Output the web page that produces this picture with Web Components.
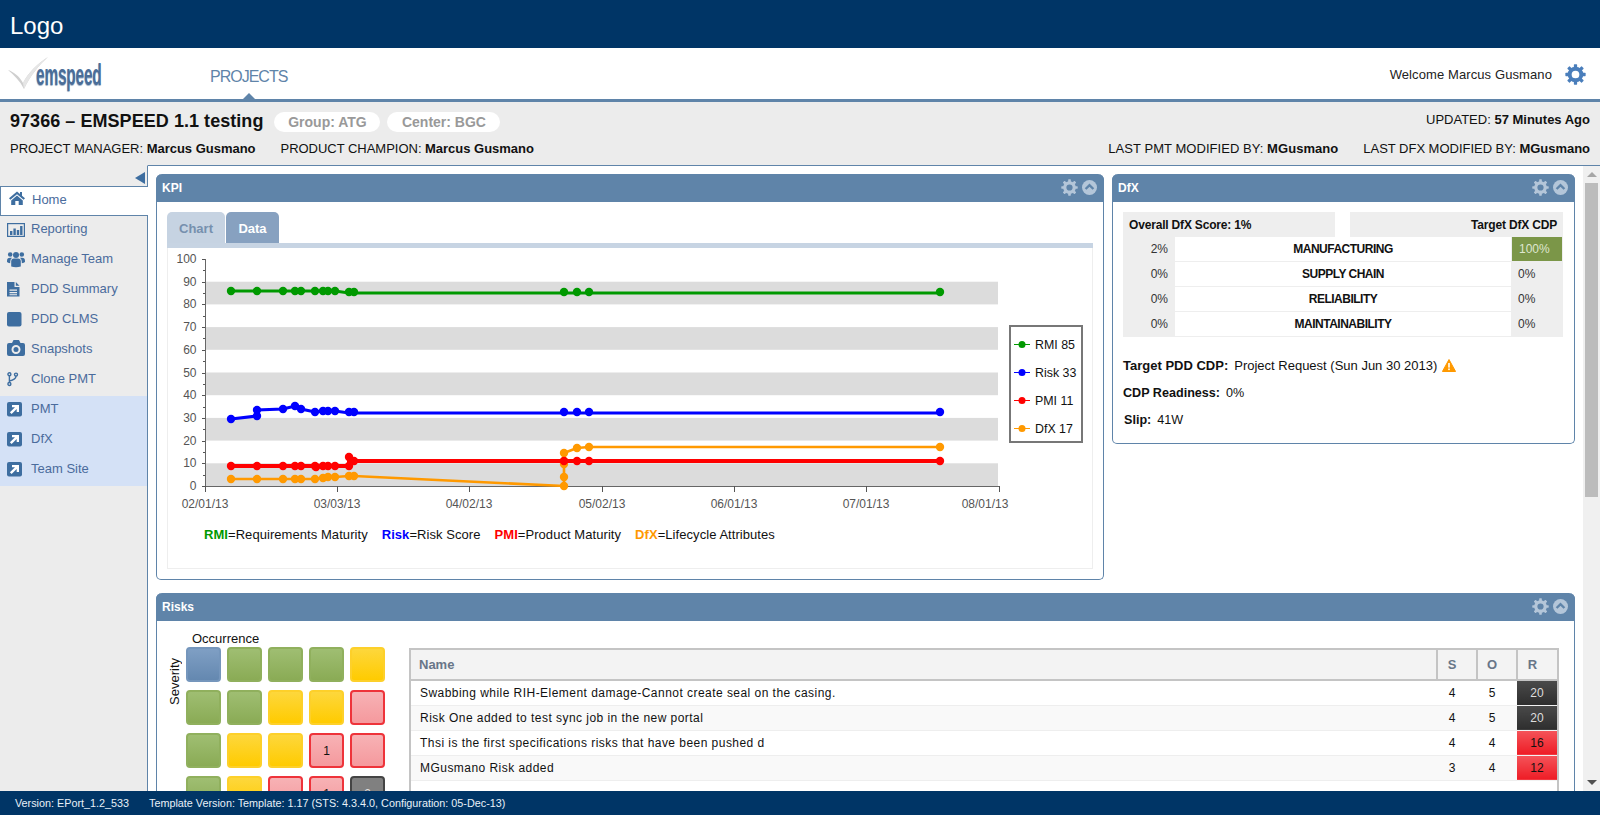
<!DOCTYPE html>
<html lang="en">
<head>
<meta charset="utf-8">
<title>EMSPEED</title>
<style>
html,body{margin:0;height:100%;overflow:hidden;background:#fff}
body{font-family:"Liberation Sans",Arial,sans-serif;font-size:13px;color:#111}
</style>
</head>
<body>
<app-shell>
  <app-topbar slot="top">Logo</app-topbar>
  <app-nav slot="top"></app-nav>
  <project-header slot="top"></project-header>
  <side-nav slot="side">
    <side-item icon="home" active>Home</side-item>
    <side-item icon="report">Reporting</side-item>
    <side-item icon="team">Manage Team</side-item>
    <side-item icon="file">PDD Summary</side-item>
    <side-item icon="square">PDD CLMS</side-item>
    <side-item icon="camera">Snapshots</side-item>
    <side-item icon="branch">Clone PMT</side-item>
    <side-item icon="ext" link>PMT</side-item>
    <side-item icon="ext" link>DfX</side-item>
    <side-item icon="ext" link>Team Site</side-item>
  </side-nav>
  <dash-board slot="main">
    <dash-panel heading="KPI"><kpi-chart></kpi-chart></dash-panel>
    <dash-panel heading="DfX"><dfx-summary></dfx-summary></dash-panel>
    <dash-panel heading="Risks" wide>
      <risk-view></risk-view>
    </dash-panel>
  </dash-board>
  <fake-scrollbar slot="scroll"></fake-scrollbar>
  <app-footer slot="bottom"></app-footer>
</app-shell>
<script>
const GEAR=(c,s=18)=>{let t='';for(let i=0;i<8;i++)t+=`<rect x="7.6" y="0.3" width="2.8" height="4" rx=".5" fill="${c}" transform="rotate(${i*45} 9 9)"/>`;
  return `<svg width="${s}" height="${s}" viewBox="0 0 18 18" aria-hidden="true">${t}<circle cx="9" cy="9" r="5" fill="none" stroke="${c}" stroke-width="3.4"/></svg>`};
function def(name,html,init){customElements.define(name,class extends HTMLElement{
  connectedCallback(){if(this.shadowRoot)return;const r=this.attachShadow({mode:'open'});
    r.innerHTML=typeof html==='function'?html(this):html;if(init)init(r,this);}
});}

def('app-shell',`<style>
:host{display:flex;flex-direction:column;height:815px;overflow:hidden}
.row{flex:1;min-height:0;display:flex}
.side{flex:none;display:flex}
.main{flex:1;min-width:0;display:flex;overflow:hidden;border-top:1px solid #5f84a9}
</style><slot name="top"></slot><div class="row"><div class="side"><slot name="side"></slot></div><div class="main"><slot name="main"></slot><slot name="scroll"></slot></div></div><slot name="bottom"></slot>`);

def('app-topbar',`<style>:host{display:flex;align-items:center;height:48px;flex:none;background:#003566;color:#fff;font-size:24px;padding-left:10px;padding-top:4px;box-sizing:border-box}</style><slot></slot>`);

def('app-nav',`<style>
:host{display:flex;align-items:center;height:54px;flex:none;background:#fff;border-bottom:3px solid #5f84a9;box-sizing:border-box;position:relative}
.logo{width:110px;height:44px;margin-left:6px;position:relative;flex:none}
.logo svg{position:absolute;left:0;top:0}
.word{position:absolute;left:30px;top:8px;font:bold 29px/30px "Liberation Sans Narrow","Liberation Sans",sans-serif;color:#4a6d98;transform:scaleX(.53);transform-origin:0 0;letter-spacing:-.3px;text-shadow:0 1px 1px #9fb2c8;white-space:nowrap}
.tab{margin-left:94px;font-size:16px;letter-spacing:-1px;color:#5f84a9;position:relative;align-self:stretch;display:flex;align-items:center;width:78px;padding-top:6px;box-sizing:border-box}
.tab i{position:absolute;left:33px;bottom:0;border:6px solid transparent;border-top:0;border-bottom:6px solid #5f84a9}
.right{margin-left:auto;display:flex;align-items:center;padding:2px 14px 0 0}
.right span{margin-right:13px;font-size:13px;color:#222;letter-spacing:.1px}
</style>
<div class="logo"><svg width="46" height="44" viewBox="0 0 46 44" aria-hidden="true"><path d="M2 18 C8 20 13 24 17 31 C22 21 32 11 42 5 C33 13 24 24 18 37 C14 29 8 23 2 18Z" fill="#cfcfcf"/><path d="M17 31 C22 21 32 11 42 5 C33 13 24 24 18 37Z" fill="#e6e6e6"/></svg><span class="word">emspeed</span></div>
<div class="tab">PROJECTS<i></i></div>
<div class="right"><span>Welcome Marcus Gusmano</span>${GEAR('#4a7ebb',21)}</div>`);

def('project-header',`<style>
:host{display:block;height:63px;flex:none;background:#ececec;box-sizing:border-box;padding:0 10px;color:#111}
.a,.b{display:flex;align-items:center}
.a{height:34px;padding-top:2px;box-sizing:border-box}
.b{height:24px;font-size:13px;letter-spacing:-.02px}
h1{font-size:18px;margin:2px 0 0;font-weight:bold;letter-spacing:.05px}
.pill{background:#fff;border-radius:10px;height:20px;line-height:20px;font-weight:bold;font-size:14px;color:#999;box-sizing:border-box;text-align:center;margin:4px 0 0 7px}
.p1{width:106px;margin-left:11px}.p2{width:113px}
b{font-weight:bold}
.sp{margin-left:auto}
.up{margin-bottom:2px;font-size:13px}
.g{margin-left:25px}
.w{letter-spacing:.05px}
</style>
<div class="a"><h1>97366 – EMSPEED 1.1 testing</h1><span class="pill p1">Group: ATG</span><span class="pill p2">Center: BGC</span><span class="sp up">UPDATED: <b>57 Minutes Ago</b></span></div>
<div class="b"><span>PROJECT MANAGER: <b>Marcus Gusmano</b></span><span class="g">PRODUCT CHAMPION: <b>Marcus Gusmano</b></span><span class="sp w">LAST PMT MODIFIED BY: <b>MGusmano</b></span><span class="g">LAST DFX MODIFIED BY: <b>MGusmano</b></span></div>`);

def('side-nav',`<style>
:host{display:block;width:148px;box-sizing:border-box;background:#ececec;border-right:1px solid #5f84a9;border-top:1px solid #ececec;position:relative}
.t{height:20px;display:flex;justify-content:flex-end;align-items:flex-end;padding-right:2px;box-sizing:border-box;padding-bottom:2px}
.t i{border:6px solid transparent;border-left:0;border-right:10px solid #3e6ea0}
</style><div class="t"><i></i></div><slot></slot>`);

const ICONS={
home:`<path d="M9 1.5 L1 8.3 L2.4 9.7 L9 4.2 L15.6 9.7 L17 8.3 L14 5.7 V2 H12 V4 Z M9 5.6 L3.2 10.4 V15 H7.3 V11 H10.7 V15 H14.8 V10.4Z"/>`,
report:`<rect x=".6" y=".6" width="16.8" height="12.8" fill="none" stroke="#3e6ea0" stroke-width="1.2"/><rect x="3" y="8" width="2.4" height="4"/><rect x="6.4" y="5.5" width="2.4" height="6.5"/><rect x="9.8" y="7" width="2.4" height="5"/><rect x="13.1" y="3" width="2.4" height="9"/>`,
team:`<circle cx="9" cy="4" r="3"/><circle cx="3.2" cy="3.5" r="2.3"/><circle cx="14.8" cy="3.5" r="2.3"/><path d="M4.2 15.5 V10.5 Q4.2 7.5 7 7.5 H11 Q13.8 7.5 13.8 10.5 V15.5 Q9 17 4.2 15.5Z"/><path d="M0 10 Q0 6.8 3 6.8 H5 Q3.2 8.2 3.2 10.8 V12.2 Q0.8 12 0 11Z"/><path d="M18 10 Q18 6.8 15 6.8 H13 Q14.8 8.2 14.8 10.8 V12.2 Q17.2 12 18 11Z"/>`,
file:`<path fill-rule="evenodd" d="M0 0 H7.5 V5 H12.5 V14.5 H0Z M2.5 7.5 V8.7 H10 V7.5Z M2.5 10 V11.2 H10 V10Z M2.5 12.3 V13.3 H10 V12.3Z"/><path d="M8.8 0 L12.5 3.8 H8.8Z"/>`,
square:`<rect x="0" y="0" width="14.5" height="14.5" rx="2"/>`,
camera:`<path fill-rule="evenodd" d="M2 3 H5 L6.5 0 H12 L13.5 3 H16 Q18 3 18 5 V14 Q18 16 16 16 H2 Q0 16 0 14 V5 Q0 3 2 3Z M9 5 A4.5 4.5 0 1 0 9 14 A4.5 4.5 0 1 0 9 5Z"/><circle cx="9" cy="9.5" r="2.5"/>`,
branch:`<g fill="none" stroke="#3e6ea0" stroke-width="1.4"><circle cx="2.4" cy="2.2" r="1.5"/><circle cx="2.4" cy="12" r="1.5"/><circle cx="9" cy="2.6" r="1.5"/><path d="M2.4 3.7 V10.5 M9 4.1 Q9 7.8 2.4 9"/></g>`,
ext:`<rect width="15" height="14.5" rx="2"/><path d="M5 3 H12 V10 H9.7 V6.9 L4.6 12 L2.9 10.3 L8 5.2 H5Z" fill="#fff"/>`
};
const TOPS={home:3,report:7,team:5,file:6,square:6,camera:4,branch:6,ext:6};
def('side-item',h=>`<style>
:host{display:flex;height:30px;box-sizing:border-box;padding:4px 0 0 7px;color:#4a6b9c;font-size:13px;line-height:17px;position:relative}
:host([active]){background:#fff;width:148px;border:1px solid #5f84a9;border-right:0;z-index:1;margin-right:-1px}
:host([link]){background:#d4e1f6}
svg{flex:none;width:18px;height:17px;margin-right:6px;margin-top:${TOPS[h.getAttribute('icon')]-4}px;fill:#3e6ea0;overflow:visible}
</style><svg viewBox="0 0 18 17" aria-hidden="true">${ICONS[h.getAttribute('icon')]}</svg><span><slot></slot></span>`);

def('dash-board',`<style>
:host{flex:1;min-width:0;display:grid;grid-template-columns:948px 463px;column-gap:8px;row-gap:13px;align-content:start;align-items:start;padding:8px 8px 0;box-sizing:border-box;background:#fff;overflow:hidden}
</style><slot></slot>`);

def('dash-panel',h=>`<style>
:host{display:block;background:#fff;border:1px solid #5f84a9;border-top:0;border-radius:6px 6px 5px 5px;box-sizing:border-box}
:host([wide]){grid-column:1 / span 2}
header{height:28px;margin:0 -1px;background:#5f84a9;border-radius:6px 6px 0 0;display:flex;align-items:center;color:#fff;font-weight:bold;font-size:12px;padding:0 4px 0 6px}
.ic{margin:-2px 0 0 auto;display:flex;align-items:center;gap:3px;padding-right:2px}
</style><header><span>${h.getAttribute('heading')}</span><span class="ic">${GEAR('#b4c6d9',17)}<svg width="17" height="17" viewBox="0 0 17 17" aria-hidden="true"><circle cx="8.5" cy="8.5" r="7.5" fill="#b4c6d9"/><path d="M4.6 10 L8.5 6.1 L12.4 10" fill="none" stroke="#5f84a9" stroke-width="2.4"/></svg></span></header><slot></slot>`);

def('kpi-chart',`<style>
:host{display:block;padding:10px;height:357px;box-sizing:content-box}
.tabs{display:flex;gap:1px;height:31px}
.tabs span{border-radius:5px 5px 0 0;font-weight:bold;font-size:13px;display:flex;align-items:center;justify-content:center;padding-top:1px;box-sizing:border-box}
.c{width:58px;background:#c6d3e2;color:#7690ae}
.d{width:53px;background:#87a1c0;color:#fff}
.strip{height:5px;background:#c7d4e3}
.box{height:321px;box-sizing:border-box;border:1px solid #eee;border-top:0;display:flex;flex-direction:column}
svg{display:block;flex:none;margin-left:-1px}
.leg{display:flex;font-size:13px;letter-spacing:.06px;margin:2px 0 0 36px;gap:14px;color:#111;line-height:16px}
.leg b{font-weight:bold}
</style>
<div class="tabs"><span class="c">Chart</span><span class="d">Data</span></div><div class="strip"></div>
<div class="box"><svg id="s" width="925" height="277" viewBox="167 248 925 277" font-family="Liberation Sans, Arial, sans-serif" font-size="12"></svg>
<div class="leg"><span><b style="color:#090">RMI</b>=Requirements Maturity</span><span><b style="color:#00f">Risk</b>=Risk Score</span><span><b style="color:#f00">PMI</b>=Product Maturity</span><span><b style="color:#f90">DfX</b>=Lifecycle Attributes</span></div></div>`,
r=>{
 const Y=v=>486-v*2.27;let o='';
 for(const b of [0,20,40,60,80])o+=`<rect x="205" y="${Y(b+10)}" width="793" height="${22.7}" fill="#dcdcdc"/>`;
 o+=`<path d="M205.5 259 V486.5 H999" fill="none" stroke="#666"/>`;
 for(let v=0;v<=100;v+=5){const y=Math.round(Y(v))+.5;o+=`<path d="M${v%10?203:202} ${y} H205" stroke="#555"/>`;}
 for(let v=0;v<=100;v+=10)o+=`<text x="196.5" y="${Math.round(Y(v))+3.5}" text-anchor="end" fill="#555">${v}</text>`;
 const xs=[[205,205,'02/01/13'],[337,337,'03/03/13'],[469,469,'04/02/13'],[602,602,'05/02/13'],[734,734,'06/01/13'],[866,866,'07/01/13'],[999,985,'08/01/13']];
 for(const [t,l,s] of xs){o+=`<path d="M${t+.5} 486 V492" stroke="#555"/><text x="${l}" y="508" text-anchor="middle" fill="#555">${s}</text>`;}
 const series=[
 ['#090',3,[[231,291],[257,291],[283,291],[295,291],[301,291],[315,291],[323,291],[328,291],[335,291],[349,292],[354,292],[564,292],[577,292],[589,292],[940,292]]],
 ['#00f',3,[[231,419],[257,416],[257,410],[283,409],[295,406],[301,409],[315,412],[323,411],[328,411],[335,411],[349,412],[354,412],[564,412],[577,412],[589,412],[940,412]]],
 ['#f00',4,[[231,466],[257,466],[283,466],[295,466],[301,466],[315,466],[316,467],[323,466],[328,466],[335,466],[349,466],[349,457],[354,461],[564,461],[577,461],[589,461],[940,461]]],
 ['#f90',2.6,[[231,479],[257,479],[283,479],[295,479],[301,479],[315,479],[323,478],[328,477],[335,477],[349,476],[354,476],[564,486],[564,477],[564,464],[564,461],[564,453],[577,448],[589,447],[940,447]]]];
 for(const i of [0,1,3,2]){const [c,w,p]=series[i];
  const dy=q=>(i===0||i===1)&&q[0]>=349?q[1]+1:q[1];
  o+=`<polyline fill="none" stroke="${c}" stroke-width="${w}" points="${p.map(q=>q[0]+','+dy(q)).join(' ')}"/>`;
  for(const q of p)o+=`<circle cx="${q[0]}" cy="${q[1]}" r="4.2" fill="${c}"/>`;}
 o+=`<rect x="1010" y="326" width="72" height="116" fill="#fff" stroke="#777" stroke-width="2"/>`;
 [['#090','RMI 85',344],['#00f','Risk 33',372],['#f00','PMI 11',400],['#f90','DfX 17',428]].forEach(([c,t,y])=>{
  o+=`<path d="M1014 ${y+.5} H1030" stroke="${c}"/><circle cx="1022" cy="${y+.5}" r="3.5" fill="${c}"/><text x="1035" y="${y+4.5}" fill="#111" font-size="12.4">${t}</text>`;});
 r.getElementById('s').innerHTML=o;
});

def('dfx-summary',`<style>
:host{display:block;padding:10px 10px 0;height:241px;box-sizing:border-box;font-size:12px;color:#111}
.h{display:grid;grid-template-columns:212px 213px;justify-content:space-between;height:25px;width:440px}
.h div{background:#eee;font-weight:bold;display:flex;align-items:center;padding:0 6px;box-sizing:border-box;letter-spacing:-.18px}
.h div+div{justify-content:flex-end}
.r{display:grid;grid-template-columns:52px 336px 52px;height:25px;width:440px}
.r>*{display:flex;align-items:center;box-sizing:border-box}
.l{background:#eee;justify-content:flex-end;padding-right:7px;color:#333}
.m{background:#fff;justify-content:center;font-weight:bold;border-bottom:1px solid #eee;letter-spacing:-.5px}
.e{background:#eee;padding-left:7px;color:#333}
.e.g{background:#eee;padding:0}
.e.g span{background:#7b9648;color:#dfe6cf;display:flex;align-items:center;margin:0 1px;width:50px;height:24px;padding-left:7px;box-sizing:border-box;align-self:flex-start}
.l,.e{border-bottom:1px solid #eee}
p{margin:0;height:27px;display:flex;align-items:center;font-size:12.6px}
p.f{font-size:13px}
p b{margin-right:6px}
.sum{margin-top:15px}
.sum svg{margin-left:5px}
</style>
<div class="h"><div>Overall DfX Score: 1%</div><div>Target DfX CDP</div></div>
<div class="r"><span class="l">2%</span><span class="m">MANUFACTURING</span><span class="e g"><span>100%</span></span></div>
<div class="r"><span class="l">0%</span><span class="m">SUPPLY CHAIN</span><span class="e">0%</span></div>
<div class="r"><span class="l">0%</span><span class="m">RELIABILITY</span><span class="e">0%</span></div>
<div class="r"><span class="l">0%</span><span class="m">MAINTAINABILITY</span><span class="e">0%</span></div>
<div class="sum"><p class="f"><b>Target PDD CDP:</b> Project Request (Sun Jun 30 2013)<svg width="14" height="13" viewBox="0 0 14 13" aria-hidden="true"><path d="M7 .5 L13.6 12.5 H.4Z" fill="#f90" stroke="#f90" stroke-linejoin="round"/><rect x="6.2" y="4" width="1.6" height="4.6" fill="#fff"/><rect x="6.2" y="9.5" width="1.6" height="1.6" fill="#fff"/></svg></p>
<p><b>CDP Readiness:</b> 0%</p><p style="padding-left:1px"><b>Slip:</b> 41W</p></div>`);

const M=[['b','g','g','g','y'],['g','g','y','y','r'],['g','y','y','r1','r'],['g','y','r','r1','k2'],['y','y','r','r','k']];
def('risk-view',`<style>
:host{display:flex;align-items:flex-start;padding:0 15px 0 0;height:300px;box-sizing:border-box;color:#111}
.mx{width:252px;flex:none;position:relative;padding:26px 0 0 29px;box-sizing:border-box}
.occ{position:absolute;left:35px;top:11px;font-size:13px;line-height:14px}
.sev{position:absolute;left:11px;top:37px;writing-mode:vertical-rl;transform:rotate(180deg);font-size:13px;line-height:14px}
.grid{display:grid;grid-template-columns:repeat(5,35px);grid-auto-rows:35px;column-gap:6px;row-gap:8px}
.grid div{box-sizing:border-box;border-radius:4px;border:2px solid;display:flex;align-items:center;justify-content:center;font-size:12px}
.b{background:linear-gradient(#7f9fc4,#6488b0);border-color:#7596bc!important}
.g{background:linear-gradient(#9fbe72,#8aab55);border-color:#90b05d!important}
.y{background:linear-gradient(#fdd73c,#ffcb00);border-color:#fdd02a!important}
.r{background:linear-gradient(#f7b2b5,#f5999d);border-color:#ee333a!important}
.k{background:#808080;border-color:#444!important;color:#ddd}
table{flex:1;margin-top:27px;border-collapse:collapse;table-layout:fixed;font-size:12px;border:2px solid #c4c4c4;border-bottom:0;height:200px}
th{background:#f3f3f3;height:31px;text-align:left;color:#687688;font-size:13px;border-right:2px solid #c4c4c4;border-bottom:2px solid #c4c4c4;padding:0 0 0 8px;box-sizing:border-box}
th:last-child{border-right:0}
td{height:25px;padding:0 0 0 9px;box-sizing:border-box;border-bottom:1px solid #eee;letter-spacing:.46px;color:#111}
td.n{text-align:center;padding:0 10px 0 0;letter-spacing:0}
tr:nth-child(even) td{background:#f9f9f9}
td.x{text-align:center;padding:0;letter-spacing:0;border-bottom:1px solid #f2f2f2}
tr:nth-child(n) td.dk{background:linear-gradient(#4a4a4a,#2e2e2e);color:#ddd}
tr:nth-child(n) td.rd{background:linear-gradient(#f4545a,#ee1c25);color:#111}
.cs th:nth-child(n+2){text-align:center;padding:0 10px 0 0}
tr.blank td{height:auto;border:0;background:#fff!important}
</style>
<div class="mx"><span class="occ">Occurrence</span><span class="sev">Severity</span><div class="grid" id="g"></div></div>
<table><colgroup><col><col style="width:40px"><col style="width:40px"><col style="width:41px"></colgroup>
<thead class="cs"><tr><th>Name</th><th>S</th><th>O</th><th>R</th></tr></thead>
<tbody>
<tr><td>Swabbing while RIH-Element damage-Cannot create seal on the casing.</td><td class="n">4</td><td class="n">5</td><td class="x dk">20</td></tr>
<tr><td>Risk One added to test sync job in the new portal</td><td class="n">4</td><td class="n">5</td><td class="x dk">20</td></tr>
<tr><td>Thsi is the first specifications risks that have been pushed d</td><td class="n">4</td><td class="n">4</td><td class="x rd">16</td></tr>
<tr><td>MGusmano Risk added</td><td class="n">3</td><td class="n">4</td><td class="x rd">12</td></tr>
<tr class="blank"><td colspan="4"></td></tr>
</tbody></table>`,
r=>{r.getElementById('g').innerHTML=M.flat().map(c=>`<div class="${c[0]}">${c.slice(1)}</div>`).join('');});

def('fake-scrollbar',`<style>
:host{display:flex;flex-direction:column;align-items:center;width:17px;flex:none;background:#f0f0f0;box-sizing:border-box;position:relative}
.u{margin-top:6px;border:5px solid transparent;border-top:0;border-bottom:5px solid #a6a6a6}
.th{margin-top:6px;width:13px;height:314px;background:#bcbcbc}
.d{margin-top:auto;margin-bottom:6px;border:5px solid transparent;border-bottom:0;border-top:5px solid #505050}
</style><i class="u"></i><div class="th"></div><i class="d"></i>`);

def('app-footer',`<style>
:host{display:flex;align-items:center;height:24px;flex:none;background:#003566;color:#e8f0f8;font-size:10.8px;box-sizing:border-box;padding-left:15px;position:relative;z-index:2}
span+span{margin-left:20px}
</style><span>Version: EPort_1.2_533</span><span>Template Version: Template: 1.17 (STS: 4.3.4.0, Configuration: 05-Dec-13)</span>`);
</script>
</body>
</html>
